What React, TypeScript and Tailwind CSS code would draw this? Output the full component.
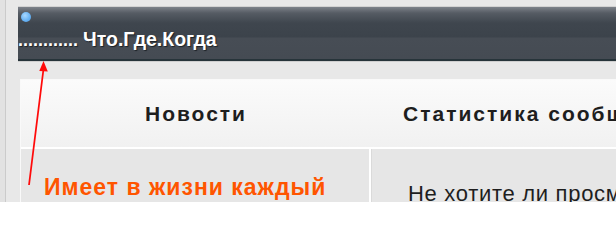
import React from "react";

export default function App() {
  return (
    <div className="relative w-[616px] h-[202px] overflow-hidden bg-[#e8e8e8] flex font-['Liberation_Sans',Arial,sans-serif]">
      <div className="w-[6px] shrink-0 bg-[#e2e2e2] border-r border-[#cbcbcb]" />
      <div className="flex-1 min-w-0 pl-[12px]">
        {/* header bar */}
        <div className="mt-[6px] h-[55px] border-t border-[#d2d2d2] border-b-2 border-b-[#27343a] shadow-[0_1px_0_#cfcfcf] bg-[linear-gradient(to_bottom,#7d828a_0px,#565c64_6px,#3f464e_16px,#3c434b_30px,#474d55_31px,#454b53_100%)] pl-[3px] pt-[5px]">
          <div className="w-[10px] h-[10px] rounded-full bg-[radial-gradient(circle_at_40%_35%,#a9d8ff_0%,#6ab4f5_55%,#4d97dc_100%)]" />
          <div className="-ml-[3px] mt-[8px] text-[18px] leading-[18px] font-bold text-white whitespace-nowrap [text-shadow:1px_1px_1px_#1c2126]">
            ............ <span className="text-[19.5px]">Что.Где.Когда</span>
          </div>
        </div>
        {/* panel */}
        <div className="ml-[2px] mt-[18px] border-l border-t border-[#f9f9f9] bg-[#f4f4f4]">
          <div className="flex h-[69px] border-b-2 border-white bg-[linear-gradient(to_bottom,#fbfbfb,#f1f1f1)]">
            <div className="w-[350px] shrink-0 pt-[22px] text-center text-[21px] leading-[24px] font-bold tracking-[2px] text-[#1e1e1e]">
              Новости
            </div>
            <div className="flex-1 pt-[22px] pl-[32px] text-[21px] leading-[24px] font-bold tracking-[2px] text-[#1e1e1e] whitespace-nowrap overflow-hidden">
              Статистика сообщений
            </div>
          </div>
          <div className="flex h-[60px]">
            <div className="w-[348px] shrink-0 bg-[#e6e6e6] pt-[25px] pl-[23px] text-[23px] leading-[26px] font-bold tracking-[1px] text-[#ff5500] whitespace-nowrap">
              Имеет в жизни каждый
            </div>
            <div className="w-[2px] shrink-0 bg-white" />
            <div className="flex-1 bg-[#e6e6e6] border-l border-[#dadada] pt-[32px] pl-[36px] text-[22px] leading-[26px] tracking-[0.7px] text-[#1e1e1e] whitespace-nowrap overflow-hidden">
              Не хотите ли просмотреть
            </div>
          </div>
        </div>
      </div>
      {/* red annotation arrow */}
      <svg className="absolute inset-0 pointer-events-none" width="616" height="202" viewBox="0 0 616 202">
        <line x1="29" y1="185" x2="43.5" y2="69" stroke="#ff0a0a" strokeWidth="1.8" />
        <polygon points="43.5,61 39.3,71 47.8,71.5" fill="#ff0a0a" />
      </svg>
    </div>
  );
}
